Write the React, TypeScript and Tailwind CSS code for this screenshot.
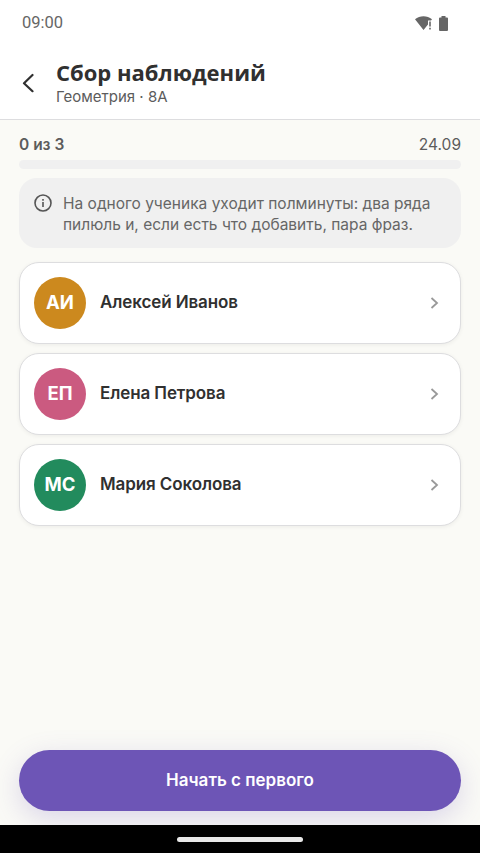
import type { ReactNode } from 'react';

interface Student {
  id: number;
  name: string;
  initials: string;
  avatarClass: string;
  nameClass: string;
}

const students: Student[] = [
  { id: 1, name: 'Алексей Иванов', initials: 'АИ', avatarClass: 'bg-[#cc891e]', nameClass: 'tracking-[-0.1px]' },
  { id: 2, name: 'Елена Петрова', initials: 'ЕП', avatarClass: 'bg-[#cb5a80]', nameClass: 'tracking-[-0.1px]' },
  { id: 3, name: 'Мария Соколова', initials: 'МС', avatarClass: 'bg-[#228b5d]', nameClass: 'tracking-[-0.1px]' },
];

function StatusBar() {
  return (
    <div className="flex h-[46px] shrink-0 items-center justify-between pl-[22px] pr-8 font-[Roboto] text-[16.5px] text-[#666]">
      <span>09:00</span>
      <div className="flex items-center gap-[6px]">
        <svg width="18" height="16" viewBox="0 0 18 16" fill="#666">
          <path d="M0 4.2C4.8 .1 12.2 .1 17 4.2L16 5.4H13v4L8.5 15z" />
          <path d="M14.2 6.4h1.6v5h-1.6zM14.2 12.8h1.6v1.7h-1.6z" />
        </svg>
        <svg width="9" height="15" viewBox="0 0 9 15" fill="#666">
          <path d="M2.5 0h4v1.5H8a1 1 0 0 1 1 1V14a1 1 0 0 1-1 1H1a1 1 0 0 1-1-1V2.500a1 1 0 0 1 1-1h1.500z" />
        </svg>
      </div>
    </div>
  );
}

function Header() {
  return (
    <header className="flex h-[74px] shrink-0 items-center border-b border-[#dddddf] pl-[22px]">
      <button aria-label="Назад" className="mr-[22px]">
        <svg width="12" height="20" viewBox="0 0 12 20" fill="none" stroke="#303030" strokeWidth="2.2" strokeLinecap="round" strokeLinejoin="round">
          <path d="M10.500 2L2 10.200l8.500 8" />
        </svg>
      </button>
      <div>
        <h1 className="font-['Open_Sans'] text-[22px] leading-[28px] font-bold whitespace-nowrap text-[#303030]">
          Сбор наблюдений
        </h1>
        <p className="text-[15px] leading-[22px] whitespace-nowrap text-[#5c5c5c]">Геометрия · 8А</p>
      </div>
    </header>
  );
}

function Note({ children }: { children: ReactNode }) {
  return (
    <div className="mt-[9px] flex h-[70px] rounded-[18px] bg-[#f0f0f0] pt-[15px] pl-[15px] text-[#666]">
      <svg className="mr-[11px] shrink-0" width="18" height="20" viewBox="0 0 18 20" fill="none" stroke="#555" strokeWidth="1.600">
        <circle cx="9" cy="10" r="8" />
        <path d="M9 9v5M9 6v1.700" />
      </svg>
      <p className="text-[15.500px] leading-[21px] whitespace-nowrap">{children}</p>
    </div>
  );
}

function StudentCard({ student }: { student: Student }) {
  return (
    <li className="flex h-[82px] items-center rounded-[20px] border border-[#dddddf] bg-white pr-[21px] pl-[14px] shadow-[0_1px_4px_rgba(0,0,0,0.06)]">
      <span
        className={`mr-[14px] flex size-[52px] items-center justify-center rounded-full text-[18.500px] font-bold text-white ${student.avatarClass}`}
      >
        {student.initials}
      </span>
      <span className={`text-[17px] font-semibold whitespace-nowrap text-[#303030] ${student.nameClass}`}>
        {student.name}
      </span>
      <svg className="ml-auto" width="9" height="12" viewBox="0 0 9 12" fill="none" stroke="#999" strokeWidth="1.800">
        <path d="M1.500 1L7 6l-5.500 5" />
      </svg>
    </li>
  );
}

export default function App() {
  return (
    <div className="flex h-[853px] w-[480px] flex-col overflow-hidden bg-white font-[Inter,sans-serif]">
      <StatusBar />
      <Header />

      <main className="flex flex-1 flex-col overflow-hidden bg-[#fafaf6] px-[19px] pt-[14px] pb-[14px]">
        <div className="flex h-[22px] items-center justify-between text-[15.500px] text-[#5c5c5c]">
          <span className="font-semibold">0 из 3</span>
          <span>24.09</span>
        </div>
        <div className="mt-[4px] h-[9px] rounded-full bg-[#f0f0f0]" />

        <Note>
          На одного ученика уходит полминуты: два ряда
          <br />
          пилюль и, если есть что добавить, пара фраз.
        </Note>

        <ul className="mt-[14px] flex flex-col gap-[9px]">
          {students.map((s) => (
            <StudentCard key={s.id} student={s} />
          ))}
        </ul>

        <button className="mt-auto h-[61px] rounded-full bg-[#6d55b6] text-[17px] font-semibold text-white shadow-[0_8px_28px_rgba(109,85,182,0.22)]">
          Начать с первого
        </button>
      </main>

      <div className="flex h-7 shrink-0 items-center justify-center bg-black">
        <div className="h-[5px] w-[126px] rounded-full bg-[#e8e8e8]" />
      </div>
    </div>
  );
}
